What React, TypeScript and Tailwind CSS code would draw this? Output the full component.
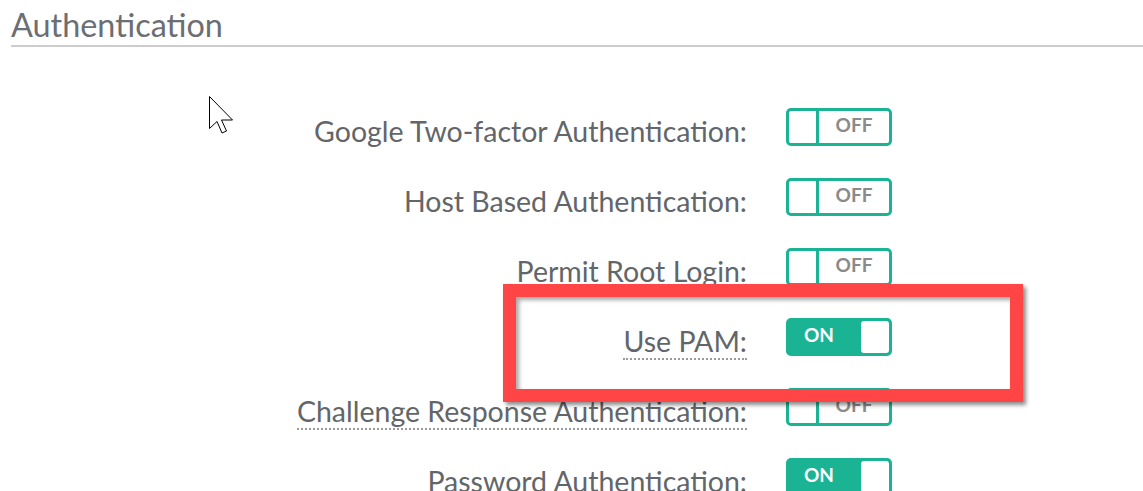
const rows = [
  { label: "Google Two-factor Authentication:", on: false, dotted: false },
  { label: "Host Based Authentication:", on: false, dotted: false },
  { label: "Permit Root Login:", on: false, dotted: false },
  { label: "Use PAM:", on: true, dotted: true },
  { label: "Challenge Response Authentication:", on: false, dotted: true },
  { label: "Password Authentication:", on: true, dotted: false },
];

function Toggle({ on }: { on: boolean }) {
  if (on) {
    return (
      <div className="flex h-[38px] w-[106px] shrink-0 items-stretch rounded-[5px] border-[3px] border-[#1ab394] bg-[#1ab394]">
        <span className="flex flex-1 items-center justify-center pr-[12px] pb-[3px] text-[19px] font-bold text-white">ON</span>
        <span className="w-[28px] rounded-[3px] bg-white" />
      </div>
    );
  }
  return (
    <div className="flex h-[38px] w-[106px] shrink-0 items-stretch rounded-[5px] border-[3px] border-[#1ab394] bg-white">
      <span className="w-[30px] border-r-[3px] border-[#1ab394]" />
      <span className="flex flex-1 items-center justify-center pb-[3px] text-[19px] font-bold text-[#8a8a8a]">OFF</span>
    </div>
  );
}

export default function App() {
  return (
    <div
      className="relative h-[491px] w-[1143px] overflow-hidden bg-white"
      style={{ fontFamily: "Lato, 'Open Sans', sans-serif" }}
    >
      <div className="ml-[11px] border-b-2 border-[#cccccc] pt-[6px] pb-[1px]">
        <h1 className="text-[32.4px] leading-[38px] font-normal text-[#6b6e72]">Authentication</h1>
      </div>

      <div className="mt-[61px] flex flex-col gap-[32px]">
        {rows.map((r) => (
          <div key={r.label} className="flex h-[38px] items-center">
            <div className="mt-[8px] w-[747px] shrink-0 text-right text-[28.5px] leading-[32px] text-[#62666a]">
              <span className={r.dotted ? "border-b-2 border-dotted border-[#9a9a9a]" : ""}>{r.label}</span>
            </div>
            <div className="ml-[39px]">
              <Toggle on={r.on} />
            </div>
          </div>
        ))}
      </div>

      {/* annotation box */}
      <div className="absolute left-[503px] top-[284px] h-[118px] w-[520px] border-[13px] border-[#ff4545] shadow-[3px_3px_4px_rgba(0,0,0,0.45),inset_3px_3px_4px_rgba(0,0,0,0.35)]" />

      {/* mouse pointer */}
      <svg className="absolute left-[208px] top-[95px]" width="28" height="40" viewBox="0 0 28 40">
        <path
          d="M1.5 1.5 L1.5 33.5 L9 26.5 L14 38 L18.5 36 L13.5 25 L24.5 25 Z"
          fill="white"
          stroke="black"
          strokeWidth="1"
          strokeLinejoin="miter"
        />
      </svg>
    </div>
  );
}
